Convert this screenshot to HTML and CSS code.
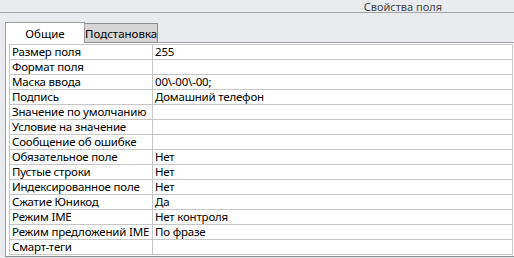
FILE: index.html
```html
<!DOCTYPE html>
<html lang="ru">
<head>
  <meta charset="UTF-8">
  <title>Свойства поля</title>
  <link rel="stylesheet" href="styles.css">
</head>
<body>
  <div class="header">Свойства поля</div>

  <div class="tabs">
    <div class="tab tab-active">Общие</div>
    <div class="tab">Подстановка</div>
    <div class="tab-filler"></div>
  </div>

  <div class="panel">
    <table class="props">
      <colgroup>
        <col class="col-name">
        <col>
      </colgroup>
      <tr><td>Размер поля</td><td>255</td></tr>
      <tr><td>Формат поля</td><td></td></tr>
      <tr><td>Маска ввода</td><td>00\-00\-00;</td></tr>
      <tr><td>Подпись</td><td>Домашний телефон</td></tr>
      <tr><td>Значение по умолчанию</td><td></td></tr>
      <tr><td>Условие на значение</td><td></td></tr>
      <tr><td>Сообщение об ошибке</td><td></td></tr>
      <tr><td>Обязательное поле</td><td>Нет</td></tr>
      <tr><td>Пустые строки</td><td>Нет</td></tr>
      <tr><td>Индексированное поле</td><td>Нет</td></tr>
      <tr><td>Сжатие Юникод</td><td>Да</td></tr>
      <tr><td>Режим IME</td><td>Нет контроля</td></tr>
      <tr><td>Режим предложений IME</td><td>По фразе</td></tr>
      <tr><td>Смарт-теги</td><td></td></tr>
    </table>
  </div>
</body>
</html>
```

FILE: styles.css
```css
body {
  margin: 0;
  background-color: #e9ebef;
  font-family: "Noto Sans", "Open Sans", sans-serif;
  font-size: 11.5px;
  color: #000;
}

.header {
  height: 11px;
  padding-top: 1px;
  line-height: 11px;
  font-size: 11px;
  border-bottom: 1px solid #a3a5a9;
  text-align: right;
  padding-right: 72px;
  color: #444;
}

.tabs {
  display: flex;
  align-items: flex-end;
  margin-top: 9px;
  padding-left: 5px;
}

.tab {
  height: 18px;
  line-height: 19px;
  width: 72px;
  text-align: center;
  background-color: #d5d5d5;
  border: 1px solid #8e8e8e;
  border-left: none;
  white-space: nowrap;
}

.tab-active {
  height: 20px;
  line-height: 21px;
  width: 78px;
  background-color: #fff;
  border: 1px solid #a0a0a0;
  border-bottom: none;
}

.tab-filler {
  flex: 1;
  border-bottom: 1px solid #a0a0a0;
}

.panel {
  margin-left: 5px;
  padding: 1px 0 1px 3px;
  background-color: #fff;
  border-left: 1px solid #a0a0a0;
  border-bottom: 1px solid #8a8c90;
}

.props {
  border-collapse: collapse;
  table-layout: fixed;
  width: 504px;
  letter-spacing: -0.2px;
}

.col-name {
  width: 143px;
}

.props td {
  height: 14px;
  line-height: 14px;
  padding: 0 2px;
  border: 1px solid #c6c6c6;
  white-space: nowrap;
  overflow: hidden;
}
```
